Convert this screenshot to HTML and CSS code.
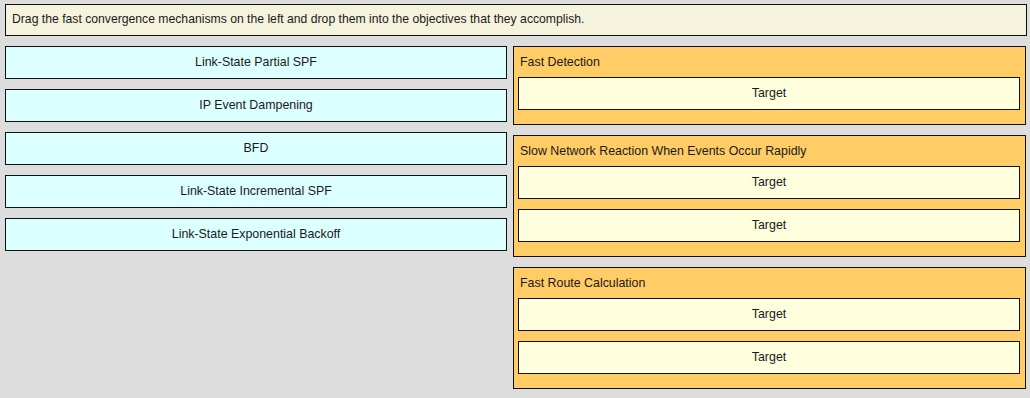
FILE: index.html
```html
<!DOCTYPE html>
<html>

<head>
    <meta name="viewport" content="width=device-width, initial-scale=1.0">
    <title>Drag and Drop</title>
    <link rel="stylesheet" href="styles.css">
</head>

<body>
    <div class="page">
        <div class="question">Drag the fast convergence mechanisms on the left and drop them into the objectives that they accomplish.</div>

        <div class="columns">
            <div class="sources">
                <div class="item">Link-State Partial SPF</div>
                <div class="item">IP Event Dampening</div>
                <div class="item">BFD</div>
                <div class="item">Link-State Incremental SPF</div>
                <div class="item">Link-State Exponential Backoff</div>
            </div>

            <div class="groups">
                <div class="group">
                    <div class="group-title">Fast Detection</div>
                    <div class="target">Target</div>
                </div>
                <div class="group">
                    <div class="group-title">Slow Network Reaction When Events Occur Rapidly</div>
                    <div class="target">Target</div>
                    <div class="target">Target</div>
                </div>
                <div class="group">
                    <div class="group-title">Fast Route Calculation</div>
                    <div class="target">Target</div>
                    <div class="target">Target</div>
                </div>
            </div>
        </div>
    </div>
</body>

</html>
```

FILE: styles.css
```css
body {
    margin: 0;
    padding: 0;
    background: #dddddd;
    font-family: "Liberation Sans", Arial, sans-serif;
    font-size: 12.4px;
    color: #1a1a1a;
    user-select: none;
}

.page {
    padding: 4px 3px 0 5px;
}

.question {
    background: #f5f3de;
    border: 1px solid #111;
    line-height: 17px;
    padding: 6px 6px 7px 6px;
    font-size: 12.2px;
}

.columns {
    display: grid;
    grid-template-columns: 502px 513px;
    column-gap: 6px;
    margin-top: 10px;
}

.sources {
    display: flex;
    flex-direction: column;
    gap: 10px;
}

.item {
    background: #dcffff;
    border: 1px solid #111;
    text-align: center;
    line-height: 17px;
    padding: 7px 0 7px 0;
}

.groups {
    display: flex;
    flex-direction: column;
    gap: 10px;
}

.group {
    background: #ffcc66;
    border: 1px solid #111;
    padding: 7px 5px 14px 4px;
    display: flex;
    flex-direction: column;
    gap: 10px;
}

.group-title {
    line-height: 17px;
    padding-left: 2px;
    margin-bottom: -4px;
}

.target {
    background: #ffffdd;
    border: 1px solid #111;
    text-align: center;
    line-height: 17px;
    padding: 7px 0 7px 0;
}
```
